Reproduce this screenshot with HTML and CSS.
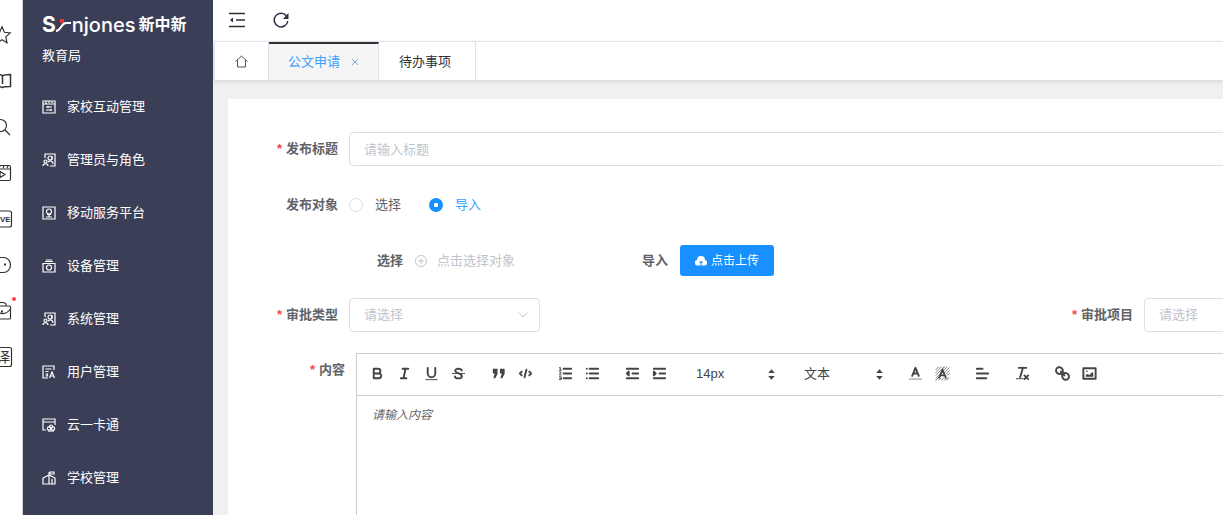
FILE: index.html
```html
<!DOCTYPE html>
<html lang="zh-CN">
<head>
<meta charset="utf-8">
<title>公文申请</title>
<link rel="stylesheet" href="styles.css">
</head>
<body>
<div class="app">
  <nav class="rail" aria-label="快捷栏">
    <a href="#" class="rail-item" aria-label="收藏"><svg viewBox="0 0 18 18"><path d="M8 .8l2.400 5.500 5.800.6-4.400 4 1.200 5.900L8 13.700l-5 3.100 1.200-5.900-4.400-4 5.800-.6z"/></svg></a>
    <a href="#" class="rail-item" aria-label="阅读"><svg viewBox="0 0 18 18"><path class="bold" d="M8.500 4C7.500 2.500 6 2.500 1 2.500v12c5 0 6.500 0 7.500 1 1-1 2-1 8-1v-12c-5 0-7 0-8 1.500zM8.500 4v8"/></svg></a>
    <a href="#" class="rail-item" aria-label="搜索"><svg viewBox="0 0 18 18"><circle cx="6.500" cy="7.500" r="6"/><path d="M11 12l5 5"/></svg></a>
    <a href="#" class="rail-item" aria-label="视频"><svg viewBox="0 0 18 18"><rect x="1" y="1.500" width="15.500" height="15" rx="1.500"/><path d="M1 5h15.500M5 4l1-2M9 4l1-2M13 4l1-2M6 7.500v6l5-3z"/></svg></a>
    <a href="#" class="rail-item" aria-label="直播"><svg viewBox="0 0 18 18"><rect x="-2" y="1" width="19.500" height="16" rx="2"/><text x="6" y="12" class="live">VE</text></svg></a>
    <a href="#" class="rail-item" aria-label="表情"><svg viewBox="0 0 18 18"><path d="M4 1.500h5.500a7 7.500 0 0 1 0 15H4"/><path class="solid" d="M10 7.500h2v2h-2z"/></svg></a>
    <a href="#" class="rail-item" aria-label="工具箱"><svg viewBox="0 0 18 18"><rect x="1" y="4" width="15.500" height="13" rx="1"/><path d="M5 .5h5l2 1.500v2M1 8c5 5 11 5 15.500-1"/><path class="solid" d="M7 8.500h2v2H7z"/></svg><span class="dot"></span></a>
    <a href="#" class="rail-item" aria-label="翻译"><svg viewBox="0 0 18 18"><rect x="-1" y="-.5" width="18.500" height="19" rx="2"/><text x="2" y="14" class="trans">译</text></svg></a>
  </nav>

  <aside class="sidebar">
    <div class="logo">
      <span class="logo-s">S</span>
      <svg class="swoosh" viewBox="0 0 16 16"><path d="M4 2h4v4H4z" fill="#e8392f"/><path d="M0 14C5 14 5 6 10 6h5" stroke="#fff" stroke-width="2"/></svg>
      <span class="logo-en">njones</span>
      <span class="logo-cn">新中新</span>
    </div>
    <div class="org">教育局</div>
    <ul class="menu">
      <li><a href="#"><svg viewBox="0 0 14 14"><path d="M1 1h12v12H1zM1 4h12M4 1v3M7 1v2M10 1v2M4 7h6M4 10h6M6 6v2M9 9v2"/></svg>家校互动管理</a></li>
      <li><a href="#"><svg viewBox="0 0 14 14"><path d="M3 5V1h10v12H8"/><circle cx="8" cy="5" r="2"/><circle cx="3.500" cy="8.500" r="1.500"/><path d="M1 13c0-3 5-3 5 0M6 9c2-2 5-1 5 2M10 3v4"/></svg>管理员与角色</a></li>
      <li><a href="#"><svg viewBox="0 0 14 14"><path d="M1 1h12v12H1zM4 11h6M5 8.500h4M7 8v3"/><circle cx="7" cy="5.500" r="2.500"/></svg>移动服务平台</a></li>
      <li><a href="#"><svg viewBox="0 0 14 14"><path d="M1 4.500h12V13H1zM3 2.500h8M4 1h6"/><circle cx="7" cy="8.500" r="2.500"/></svg>设备管理</a></li>
      <li><a href="#"><svg viewBox="0 0 14 14"><path d="M3 5V1h10v12H8"/><circle cx="8" cy="5" r="2"/><circle cx="3.500" cy="8.500" r="1.500"/><path d="M1 13c0-3 5-3 5 0M6 9c2-2 5-1 5 2M10 3v4"/></svg>系统管理</a></li>
      <li><a href="#"><svg viewBox="0 0 14 14"><path d="M12 5V1H1v12h5M3.500 4h6M3.500 6.500h3M3.500 9h2v2h-2M7.500 13l2.500-6 2.500 6M8.500 11h3"/></svg>用户管理</a></li>
      <li><a href="#"><svg viewBox="0 0 14 14"><path d="M13 7V1H1v11h3M1 4h12"/><circle cx="7" cy="10.500" r="1.700"/><circle cx="11" cy="10.500" r="1.700"/><circle cx="9" cy="8.500" r="1.500"/><path d="M6 13h6"/></svg>云一卡通</a></li>
      <li><a href="#"><svg viewBox="0 0 14 14"><path d="M1 13V7l6-3 6 3v6zM7 13V1M10 13V8"/><path d="M8 1h4v2H8z"/></svg>学校管理</a></li>
    </ul>
  </aside>

  <div class="main">
    <header class="topbar">
      <button type="button" class="icon-btn" aria-label="收起菜单"><svg viewBox="0 0 16 16"><path d="M0 1.500h16M7 8h9M0 14.500h16"/><path class="fill" d="M1 8l3-2.500v5z"/></svg></button>
      <button type="button" class="icon-btn" aria-label="刷新"><svg viewBox="0 0 16 16"><path d="M13.500 4A6.800 6.800 0 1 0 14.800 9"/><path class="fill" d="M15.500 1v6H10z"/></svg></button>
    </header>
    <nav class="tabs">
      <a href="#" class="tab home" aria-label="首页"><svg viewBox="0 0 13 13"><path d="M.5 6.500l6-5.500 6 5.500M2.500 5v7h8V5"/></svg></a>
      <div class="tab active"><a href="#">公文申请</a><button type="button" class="close" aria-label="关闭"><svg viewBox="0 0 8 8"><path d="M1 1l6 6M7 1L1 7"/></svg></button></div>
      <a href="#" class="tab">待办事项</a>
    </nav>

    <form class="card">
      <div class="row">
        <label class="label required" for="title">发布标题</label>
        <input id="title" class="field grow" type="text" placeholder="请输入标题">
      </div>
      <div class="row target" role="radiogroup" aria-labelledby="target">
        <span class="label" id="target">发布对象</span>
        <label class="radio"><input type="radio" name="target">选择</label>
        <label class="radio"><input type="radio" name="target" checked>导入</label>
      </div>
      <div class="row sub">
        <div class="pick">
          <span class="label">选择</span>
          <button type="button" class="add"><svg viewBox="0 0 12 12"><circle cx="6" cy="6" r="5.500"/><path d="M3 6h6M6 3v6"/></svg>点击选择对象</button>
        </div>
        <span class="label">导入</span>
        <button type="button" class="upload"><svg viewBox="0 0 12 10"><path d="M3 9.500A2.800 2.800 0 0 1 2 4a4 4 0 0 1 8 0 2.800 2.800 0 0 1-1 5.500H6.500V7H8L6 4.500 4 7h1.500v2.500z"/></svg>点击上传</button>
      </div>
      <div class="row split">
        <div class="cell">
          <label class="label required" for="type">审批类型</label>
          <span class="select"><select id="type" class="field"><option>请选择</option></select><svg viewBox="0 0 10 6"><path d="M.5.5L5 5 9.500.5"/></svg></span>
        </div>
        <div class="cell">
          <label class="label required" for="item">审批项目</label>
          <span class="select"><select id="item" class="field"><option>请选择</option></select><svg viewBox="0 0 10 6"><path d="M.5.5L5 5 9.500.5"/></svg></span>
        </div>
      </div>
      <div class="row content">
        <label class="label required" for="body">内容</label>
        <div class="editor">
          <div class="toolbar">
            <span class="group">
              <button type="button" aria-label="粗体"><svg viewBox="0 0 18 18"><path d="M5 4h4.500A2.500 2.500 0 0 1 12 6.500 2.500 2.500 0 0 1 9.500 9H5zM5 9h5.500A2.500 2.500 0 0 1 13 11.500 2.500 2.500 0 0 1 10.500 14H5z"/></svg></button>
              <button type="button" aria-label="斜体"><svg viewBox="0 0 18 18"><path d="M7 4h6M5 14h6M8 14l2-10"/></svg></button>
              <button type="button" aria-label="下划线"><svg viewBox="0 0 18 18"><path d="M5 3v6a4 4 0 0 0 8 0V3"/><path class="thin" d="M3 15.500h12"/></svg></button>
              <button type="button" aria-label="删除线"><svg viewBox="0 0 18 18"><path class="thin" d="M2.500 9h13"/><path d="M12.500 6C12 3.500 5.500 3 5.500 6.300 5.500 8.500 12.600 9 12.600 11.800 12.600 15 5.500 14.800 5.200 12"/></svg></button>
            </span>
            <span class="group">
              <button type="button" aria-label="引用"><svg viewBox="0 0 18 18"><path class="fill" d="M3 4h5v5.500L5.500 14H3.500L5 9H3zM10.500 4h5v5.500L13 14h-2l1.500-5h-2z"/></svg></button>
              <button type="button" aria-label="代码"><svg viewBox="0 0 18 18"><path d="M5 7L3 9l2 2M13 7l2 2-2 2M10 5L8 13"/></svg></button>
            </span>
            <span class="group">
              <button type="button" aria-label="有序列表"><svg viewBox="0 0 18 18"><path d="M7 4h8M7 9h8M7 14h8"/><path class="thin" d="M2.500 3l1-.5v3M2.500 5.500h2M2.500 7.500h2L2.500 10.500h2M2.500 12.500h2v3h-2M3 14h1.500"/></svg></button>
              <button type="button" aria-label="无序列表"><svg viewBox="0 0 18 18"><path d="M6 4h9M6 9h9M6 14h9M3 4h.01M3 9h.01M3 14h.01"/></svg></button>
            </span>
            <span class="group">
              <button type="button" aria-label="减少缩进"><svg viewBox="0 0 18 18"><path d="M3 14h12M3 4h12M9 9h6"/><path class="fill" d="M5 7v4L3 9z" stroke="#444"/></svg></button>
              <button type="button" aria-label="增加缩进"><svg viewBox="0 0 18 18"><path d="M3 14h12M3 4h12M9 9h6"/><path class="fill" d="M3 7v4l2-2z" stroke="#444"/></svg></button>
            </span>
            <span class="picker"><select aria-label="字号"><option>14px</option></select><svg viewBox="0 0 18 18"><path class="fill" d="M5.500 7.500L9 3.500l3.500 4zM5.500 10.500h7L9 14.500z"/></svg></span>
            <span class="picker"><select aria-label="段落"><option>文本</option></select><svg viewBox="0 0 18 18"><path class="fill" d="M5.500 7.500L9 3.500l3.500 4zM5.500 10.500h7L9 14.500z"/></svg></span>
            <span class="group">
              <button type="button" aria-label="文字颜色"><svg viewBox="0 0 18 18"><path class="pale" d="M3 15h12"/><path d="M5.500 11.500L9 3l3.500 8.500M6.500 9h5"/></svg></button>
              <button type="button" aria-label="背景颜色"><svg viewBox="0 0 18 18"><path class="hatch" d="M2 5l3-3M2 8l6-6M2 11l9-9M2 14l4-4M9 4l2-2M11 5l3-3M12 7l4-4M13 9l3-3M14 11l2-2M2 16l3-3M5 16l2-2M8 16l2-2M11 16l2-2M13.500 16l2.500-3"/><path d="M5.500 13.500L9 5l3.500 8.500M6.500 11h5"/></svg></button>
            </span>
            <span class="group">
              <button type="button" aria-label="对齐"><svg viewBox="0 0 18 18"><path d="M3 9h12M3 14h10M3 4h6"/></svg></button>
            </span>
            <span class="group">
              <button type="button" aria-label="清除格式"><svg viewBox="0 0 18 18"><path d="M5 3h8M6.500 13L9.500 3M11 11l4 4M15 11l-4 4"/><path class="thin" d="M2.500 14.500h7"/></svg></button>
            </span>
            <span class="group">
              <button type="button" aria-label="链接"><svg viewBox="0 0 18 18"><path d="M7 7l4 4M8.900 4.600a3.500 3.500 0 1 0-4.500 4.500c1.500.8 3 .4 4-.6s1.300-2.600.5-3.900zM13.600 8.900a3.500 3.500 0 1 1-4.500 4.500c-.8-1.500-.4-3 .6-4s2.500-1.300 3.900-.5z"/></svg></button>
              <button type="button" aria-label="图片"><svg viewBox="0 0 18 18"><path d="M2.500 3.500h13v11h-13z"/><path class="fill" d="M5 12.500v-2l2-1 2 1 3-3 1 1v4zM5.500 6h1.500v1.500H5.500z"/></svg></button>
            </span>
          </div>
          <textarea id="body" placeholder="请输入内容"></textarea>
        </div>
      </div>
    </form>
  </div>
</div>
</body>
</html>
```
FILE: styles.css
```css
* { box-sizing: border-box; }

body {
  margin: 0;
  font: 13px/20px "Liberation Sans", "Noto Sans CJK SC", sans-serif;
  color: #303133;
  background: #f0f0f0;
}

a { color: inherit; text-decoration: none; }
button, input, select, textarea { font: inherit; color: inherit; margin: 0; }
button { padding: 0; border: 0; background: none; }
svg { display: block; flex: none; fill: none; stroke: currentColor; }

.app { display: flex; height: 100vh; overflow: hidden; }

/* shortcut rail, its icons run under the window's left edge */
.rail {
  flex: none;
  display: flex;
  flex-direction: column;
  gap: 28px;
  width: 23px;
  padding-top: 26px;
  overflow: hidden;
  background: #fff;
  border-right: 1px solid #d5d5d8;
}
.rail-item { position: relative; display: block; margin-left: -6px; color: #333; }
.rail-item svg { width: 18px; height: 18px; overflow: visible; stroke-width: 1.2; }
.rail-item .bold { stroke-width: 1.5; }
.rail-item text { fill: #333; stroke: none; }
.rail-item .solid { fill: #333; stroke: none; }
.live { font-size: 8px; font-weight: 700; }
.trans { font-size: 14px; }
.dot {
  position: absolute;
  top: -5px;
  left: 18px;
  width: 4px;
  height: 4px;
  border-radius: 50%;
  background: #f5444e;
}

.sidebar {
  flex: none;
  width: 190px;
  padding-top: 13px;
  color: #fff;
  background: #3b3e57;
}
.logo { display: flex; align-items: center; height: 24px; padding-left: 19px; }
.logo-s { font: 700 21px/24px Inter, sans-serif; }
.swoosh { width: 16px; height: 16px; stroke: none; }
.logo-en { font: 500 20px/24px Inter, sans-serif; }
.logo-cn { margin-left: 3px; font-size: 16px; font-weight: 700; }
.org { padding: 9px 0 0 19px; }
.menu { margin: 14px 0 0; padding: 0; list-style: none; }
.menu a { display: flex; align-items: center; gap: 11px; height: 53px; padding-left: 19px; }
.menu svg { width: 14px; height: 14px; stroke-width: 1.2; }

.main { flex: 1; min-width: 0; overflow: hidden; }
.topbar { display: flex; align-items: center; gap: 28px; height: 41px; padding: 0 0 1px 16px; background: #fff; }
.icon-btn { color: #2b3040; }
.icon-btn svg { width: 16px; height: 16px; stroke-width: 1.5; }
.icon-btn .fill { fill: currentColor; stroke: none; }

.tabs {
  display: flex;
  height: 40px;
  margin-left: 1px;
  background: #fff;
  border: solid #dfe2ec;
  border-width: 1px 0 1px 1px;
  box-shadow: 0 1px 3px rgba(0, 0, 0, .12);
}
.tab { display: flex; align-items: center; padding: 2px 24px 0 20px; border-right: 1px solid #dfe2ec; }
.home { padding: 0 20px; color: #555; }
.home svg { width: 13px; height: 13px; }
.active { gap: 11px; padding: 0 19px; border-top: 2px solid #303133; background: #f5f5f6; color: #409eff; }
.close { color: #7fa8ea; }
.close svg { width: 8px; height: 8px; }

.card {
  display: flex;
  flex-direction: column;
  gap: 21px;
  min-height: 100vh;
  margin: 18px -20px 0 15px;
  padding-top: 33px;
  background: #fff;
}
.row { display: flex; align-items: center; min-height: 34px; }
.label { flex: none; width: 121px; padding-right: 11px; text-align: right; font-weight: 700; color: #606266; }
.required::before { content: "*"; margin-right: 4px; color: #f5444e; }
.field {
  height: 34px;
  padding: 0 14px;
  border: 1px solid #dcdfe6;
  border-radius: 4px;
  background: #fff;
}
.grow { flex: 1; min-width: 0; }
::placeholder { color: #c0c4cc; opacity: 1; }

.target { min-height: 36px; }
.radio { display: flex; align-items: center; gap: 12px; margin-right: 28px; color: #606266; }
.radio input {
  appearance: none;
  display: grid;
  place-items: center;
  width: 14px;
  height: 14px;
  border: 1px solid #dcdfe6;
  border-radius: 50%;
}
.radio input:checked { border: 0; background: #1890ff; }
.radio input:checked::before { content: ""; width: 4px; height: 4px; border-radius: 1px; background: #fff; }
.radio:has(:checked) { color: #409eff; }

.sub { min-height: 33px; padding-left: 149px; }
.sub .label { width: auto; padding-right: 12px; }
.pick { display: flex; align-items: center; width: 265px; }
.add { display: flex; align-items: center; gap: 10px; color: #c0c4cc; }
.add svg { width: 12px; height: 12px; }
.upload {
  display: flex;
  align-items: center;
  gap: 4px;
  height: 31px;
  padding: 0 15px;
  border-radius: 3px;
  font-size: 12px;
  color: #fff;
  background: #1890ff;
}
.upload svg { width: 12px; height: 10px; fill: #fff; stroke: none; }

.split { display: grid; grid-template-columns: minmax(0, 795fr) minmax(0, 220fr); }
.cell { display: flex; align-items: center; }
.select { position: relative; flex: none; width: 191px; }
.select select { width: 100%; appearance: none; color: #c0c4cc; }
.select svg { position: absolute; top: 14px; right: 12px; width: 10px; height: 6px; color: #c0c4cc; pointer-events: none; }

.content { align-items: flex-start; }
.content .label { width: 128px; padding-top: 7px; }
.editor { flex: 1; min-width: 0; border: 1px solid #ccc; }
.toolbar { display: flex; gap: 13px; align-items: center; height: 42px; padding: 0 7px 2px; border-bottom: 1px solid #ccc; color: #444; }
.group { display: flex; flex: none; }
.group button { display: grid; place-items: center; width: 27px; height: 24px; }
.toolbar svg { width: 17px; height: 17px; stroke-width: 2; stroke-linecap: round; stroke-linejoin: round; }
.toolbar .fill { fill: currentColor; }
.toolbar path.fill:not([stroke]) { stroke: none; }
.toolbar .thin { stroke-width: 1; }
.toolbar .pale { stroke: #bbb; }
.toolbar .hatch { stroke-width: 1; stroke: #777; }
.picker { position: relative; flex: none; width: 95px; }
.picker select { width: 100%; height: 24px; padding: 0 0 0 10px; border: 0; appearance: none; background: none; }
.picker svg { position: absolute; top: 4px; right: 1px; pointer-events: none; }

textarea { display: block; width: 100%; height: 300px; padding: 9px 15px; border: 0; resize: none; }
textarea::placeholder { font-size: 12px; font-style: italic; color: #666; }
```
